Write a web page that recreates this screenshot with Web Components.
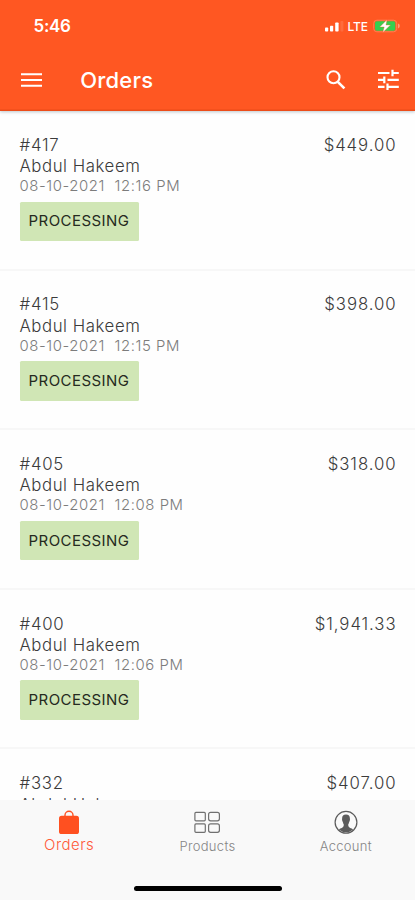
<!DOCTYPE html>
<html lang="en">
<head>
<meta charset="utf-8">
<title>Orders</title>
<style>
html,body{margin:0;height:100%}
body{font-family:Inter,"Liberation Sans",sans-serif;background:#fff;overflow:hidden}
</style>
</head>
<body>
<orders-app></orders-app>
<script>
const define=(name,html,setup)=>customElements.define(name,class extends HTMLElement{
  constructor(){super();this.attachShadow({mode:'open'}).innerHTML=html;}
  connectedCallback(){if(setup)setup(this,this.shadowRoot);}
});

define('status-bar',`
<style>
:host{display:flex;justify-content:space-between;align-items:center;height:52px;padding:0 15px 0 33.5px;color:#fff;box-sizing:border-box}
.time{font-size:17px;font-weight:600;line-height:20px;letter-spacing:-.3px}
.right{display:flex;align-items:center;height:20px}
.lte{font-size:12px;font-weight:500;margin:0 5px 0 4px;letter-spacing:-.1px}
svg{display:block}
</style>
<span class="time">5:46</span>
<span class="right">
<svg width="19" height="12" viewBox="0 0 19 12"><g fill="#fff"><rect x="0" y="7.5" width="3.2" height="4" rx=".8"/><rect x="5" y="5.8" width="3.2" height="5.7" rx=".8"/><rect x="10.2" y="2.5" width="3.4" height="9" rx=".8"/><rect x="15.4" y="1" width="3" height="10.5" rx=".8" opacity=".12"/></g></svg>
<span class="lte">LTE</span>
<svg width="27" height="14" viewBox="0 0 27 14"><rect x=".7" y="1.2" width="23" height="11.6" rx="3.2" fill="none" stroke="#ff8a60" stroke-width=".8"/><rect x="2" y="2.3" width="20.3" height="9.4" rx="1.7" fill="#34cf4f"/><path d="M25 4.6q1.8.5 1.8 2.4T25 9.4z" fill="#ff9d76"/><path d="M14 .7L6.7 8h4.5L9.8 13.4 17.5 6H13z" fill="#fff" stroke="#ff5722" stroke-width=".35"/></svg>
</span>`);

define('app-bar',`
<style>
:host{display:flex;align-items:center;height:56px;padding:0 15px 0 20px;color:#fff;box-sizing:border-box}
h1{font-size:22px;line-height:28px;font-weight:500;margin:0;padding-left:37.2px;flex:1;letter-spacing:.2px}
svg{display:block}
.search{margin-right:29.5px}
</style>
<svg width="23" height="16" viewBox="0 0 23 16"><path d="M1 2.2h21M1 8h21M1 13.8h21" stroke="#fff" stroke-width="2.1"/></svg>
<h1><slot></slot></h1>
<svg class="search" width="22" height="22" viewBox="0 0 22 22" fill="none" stroke="#fff"><circle cx="8.5" cy="8.3" r="6" stroke-width="2.1"/><path d="M12.8 12.8l6.6 6.6" stroke-width="2.6"/></svg>
<svg width="24" height="22" viewBox="0 0 24 22" fill="none" stroke="#fff" stroke-width="2.2"><path d="M2 4h11.5M15.8 4h7M2 10.9h5.5M11.5 10.9h11.3M2 17.8h6.5M11 17.8h11.8M16.5 .8v6.5M8.3 7.6v6.6M11.5 14.5v6.6"/></svg>`);

define('status-badge',`
<style>
:host{display:flex;align-items:center;justify-content:center;width:119px;height:39.5px;background:#d0e6b5;border-radius:1.5px;color:#252a20;font-size:15px;font-weight:400;letter-spacing:.45px;line-height:20px}
</style><slot></slot>`);

define('order-item',`
<style>
:host{display:block;height:159.6px;flex:none;box-sizing:border-box;padding:23.8px 18.5px 0 19.5px;border-bottom:2px solid #f7f7f7;background:#fefefe}
.top{display:flex;justify-content:space-between}
.top,.name{font-size:16.8px;line-height:21.4px;color:#3b3b3b;font-weight:300;letter-spacing:.55px}
.id{letter-spacing:.75px}
.price{letter-spacing:.92px}
.date{font-size:14.9px;line-height:18px;height:18px;color:#7c7c7c;font-weight:300;white-space:pre;letter-spacing:.58px;margin:-.6px 0 6.6px}
</style>
<div class="top"><span class="id"></span><span class="price"></span></div>
<div class="name"></div>`,(el,r)=>{
  for(const k of ['id','price','name']) r.querySelector('.'+k).textContent=el.getAttribute('data-'+k);
  if(el.hasAttribute('data-date')){
    const date=document.createElement('div'),badge=document.createElement('status-badge');
    date.className='date';
    date.textContent=el.getAttribute('data-date');
    badge.textContent='PROCESSING';
    r.append(date,badge);
  }
});

const icons={
orders:'<svg width="24" height="26" viewBox="0 0 24 26"><path d="M8 8V6.3a4 4 0 0 1 8 0V8" fill="none" stroke="#ff5020" stroke-width="1.4"/><rect x="2" y="6.8" width="20" height="18.2" rx="2.6" fill="#ff5020"/></svg>',
products:'<svg width="28" height="26" viewBox="0 0 28 26" fill="none" stroke="#707070" stroke-width="1.2"><rect x="1.9" y="3.4" width="10.4" height="8.4" rx="1"/><rect x="15.6" y="3.4" width="10.8" height="8.4" rx="2"/><rect x="1.9" y="14.9" width="10.4" height="8.4" rx="1"/><rect x="15.6" y="14.9" width="10.8" height="8.4" rx="2"/></svg>',
account:'<svg width="26" height="26" viewBox="0 0 26 26"><circle cx="13" cy="13.3" r="10.9" fill="none" stroke="#5b5b5b" stroke-width="1.2"/><path d="M13 5.5c-2.7 0-4 1.7-3.9 4.3 0 .7-.2 1 .1 1.8.2.7.5 1.2.8 1.8.2 1 .5 1.600.8 2.200 0 1.500-.4 2.600-1.600 3.100-1.500.7-2.500.9-3.300 1.900a10.600 10.600 0 0 0 14.200 0c-.8-1-1.800-1.200-3.300-1.900-1.200-.5-1.600-1.600-1.600-3.100.300-.6.600-1.200.8-2.200.3-.6.6-1.100.8-1.800.3-.8.100-1.100.100-1.800.1-2.600-1.200-4.300-3.900-4.300z" fill="#5b5b5b"/></svg>'
};
define('nav-tab',`
<style>
:host{display:flex;flex:1;flex-direction:column;align-items:center;padding-top:9px;color:#858585;font-size:13px;font-weight:350;line-height:18px;letter-spacing:.3px}
:host([active]){color:#ff5a3a;font-size:15px;letter-spacing:.45px}
svg{display:block}
.label{margin-top:2px}
:host([active]) .label{margin-top:1px}
</style><span class="icon"></span><span class="label"><slot></slot></span>`,(el,r)=>{
  r.querySelector('.icon').innerHTML=icons[el.getAttribute('icon')];
});

define('bottom-nav',`
<style>
:host{display:flex;flex-direction:column;justify-content:space-between;height:100px;background:#f9f9f9;flex:none}
.tabs{display:flex}
.home{width:148px;height:5px;border-radius:3px;background:#000;margin:0 auto 9px}
</style><div class="tabs"><slot></slot></div><div class="home"></div>`);

define('orders-app',`
<style>
:host{display:flex;flex-direction:column;height:900px;overflow:hidden}
header{background:#ff5722;height:111px;flex:none;box-shadow:0 1px 3px #5c707c66, inset 0 -1.5px #ec4c19;z-index:1}
main{flex:1;min-height:0;overflow:hidden;display:flex;flex-direction:column}
</style>
<header><status-bar></status-bar><app-bar>Orders</app-bar></header>
<main>
<order-item data-id="#417" data-price="$449.00" data-name="Abdul Hakeem" data-date="08-10-2021  12:16 PM"></order-item>
<order-item data-id="#415" data-price="$398.00" data-name="Abdul Hakeem" data-date="08-10-2021  12:15 PM"></order-item>
<order-item data-id="#405" data-price="$318.00" data-name="Abdul Hakeem" data-date="08-10-2021  12:08 PM"></order-item>
<order-item data-id="#400" data-price="$1,941.33" data-name="Abdul Hakeem" data-date="08-10-2021  12:06 PM"></order-item>
<order-item data-id="#332" data-price="$407.00" data-name="Abdul Hakeem"></order-item>
</main>
<bottom-nav><nav-tab icon="orders" active>Orders</nav-tab><nav-tab icon="products">Products</nav-tab><nav-tab icon="account">Account</nav-tab></bottom-nav>`);
</script>
</body>
</html>
